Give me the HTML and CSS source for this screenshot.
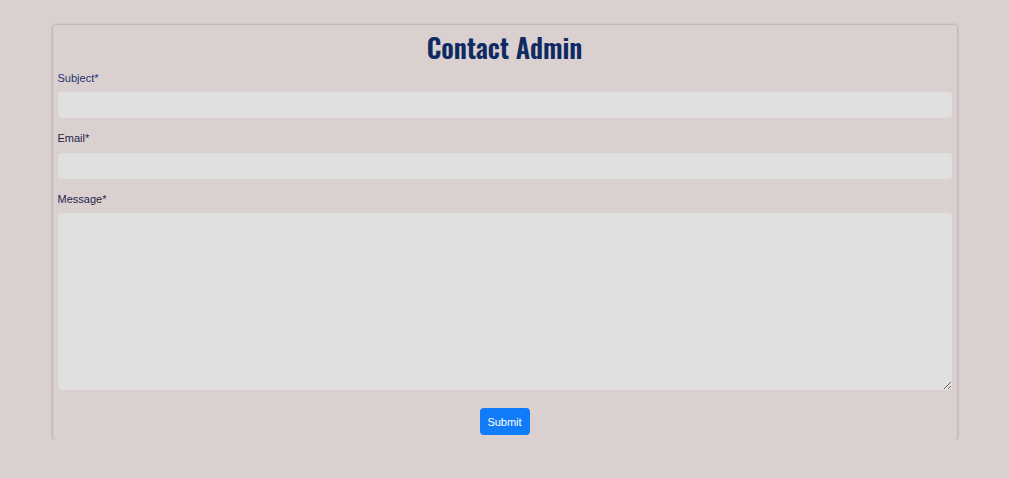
FILE: index.html
```html
<!DOCTYPE html>
<html lang="en">
<head>
<meta charset="utf-8">
<title>Contact Admin</title>
<link rel="stylesheet" href="styles.css">
</head>
<body>
<form class="card">
  <h1 class="title">Contact Admin</h1>
  <label class="label label-subject" for="subject">Subject*</label>
  <input class="field" id="subject" type="text">
  <label class="label" for="email">Email*</label>
  <input class="field" id="email" type="email">
  <label class="label" for="message">Message*</label>
  <textarea class="field area" id="message"></textarea>
  <div class="actions">
    <button class="submit" type="button">Submit</button>
  </div>
</form>
</body>
</html>
```

FILE: styles.css
```css
html, body {
  margin: 0;
  padding: 0;
}
body {
  background: #dbd0d0;
  font-family: "Liberation Sans", Arial, sans-serif;
  padding-top: 25px;
}
.card {
  width: 904px;
  box-sizing: border-box;
  margin: 0 auto;
  padding: 5px 5px 5px 5px;
  border-radius: 3px;
  box-shadow: 0 0 3px rgba(0, 0, 0, 0.35);
  display: flex;
  flex-direction: column;
}
.title {
  margin: 0;
  text-align: center;
  font-family: "Oswald", "Liberation Sans Narrow", "DejaVu Sans Condensed", sans-serif;
  font-weight: 600;
  font-size: 26.5px;
  line-height: 35px;
  color: #0e2a63;
  padding-bottom: 7px;
}
.label {
  display: block;
  font-size: 11px;
  line-height: 13px;
  color: #1f2548;
  margin-bottom: 7.5px;
}
.label-subject {
  color: #1d3370;
  margin-bottom: 7px;
}
.field {
  display: block;
  box-sizing: border-box;
  width: 100%;
  height: 26px;
  margin: 0 0 14px 0;
  border: none;
  border-radius: 4px;
  background: #e0e0e0;
  font-family: inherit;
  font-size: 12px;
  padding: 4px 8px;
}
.area {
  height: 177px;
  margin-bottom: 18px;
  resize: vertical;
}
.actions {
  display: flex;
  justify-content: center;
}
.submit {
  width: 50px;
  height: 27px;
  border: none;
  border-radius: 4px;
  background: #127bf7;
  color: #fff;
  font-family: "Liberation Sans", Arial, sans-serif;
  font-size: 11px;
  padding: 0;
}
```
